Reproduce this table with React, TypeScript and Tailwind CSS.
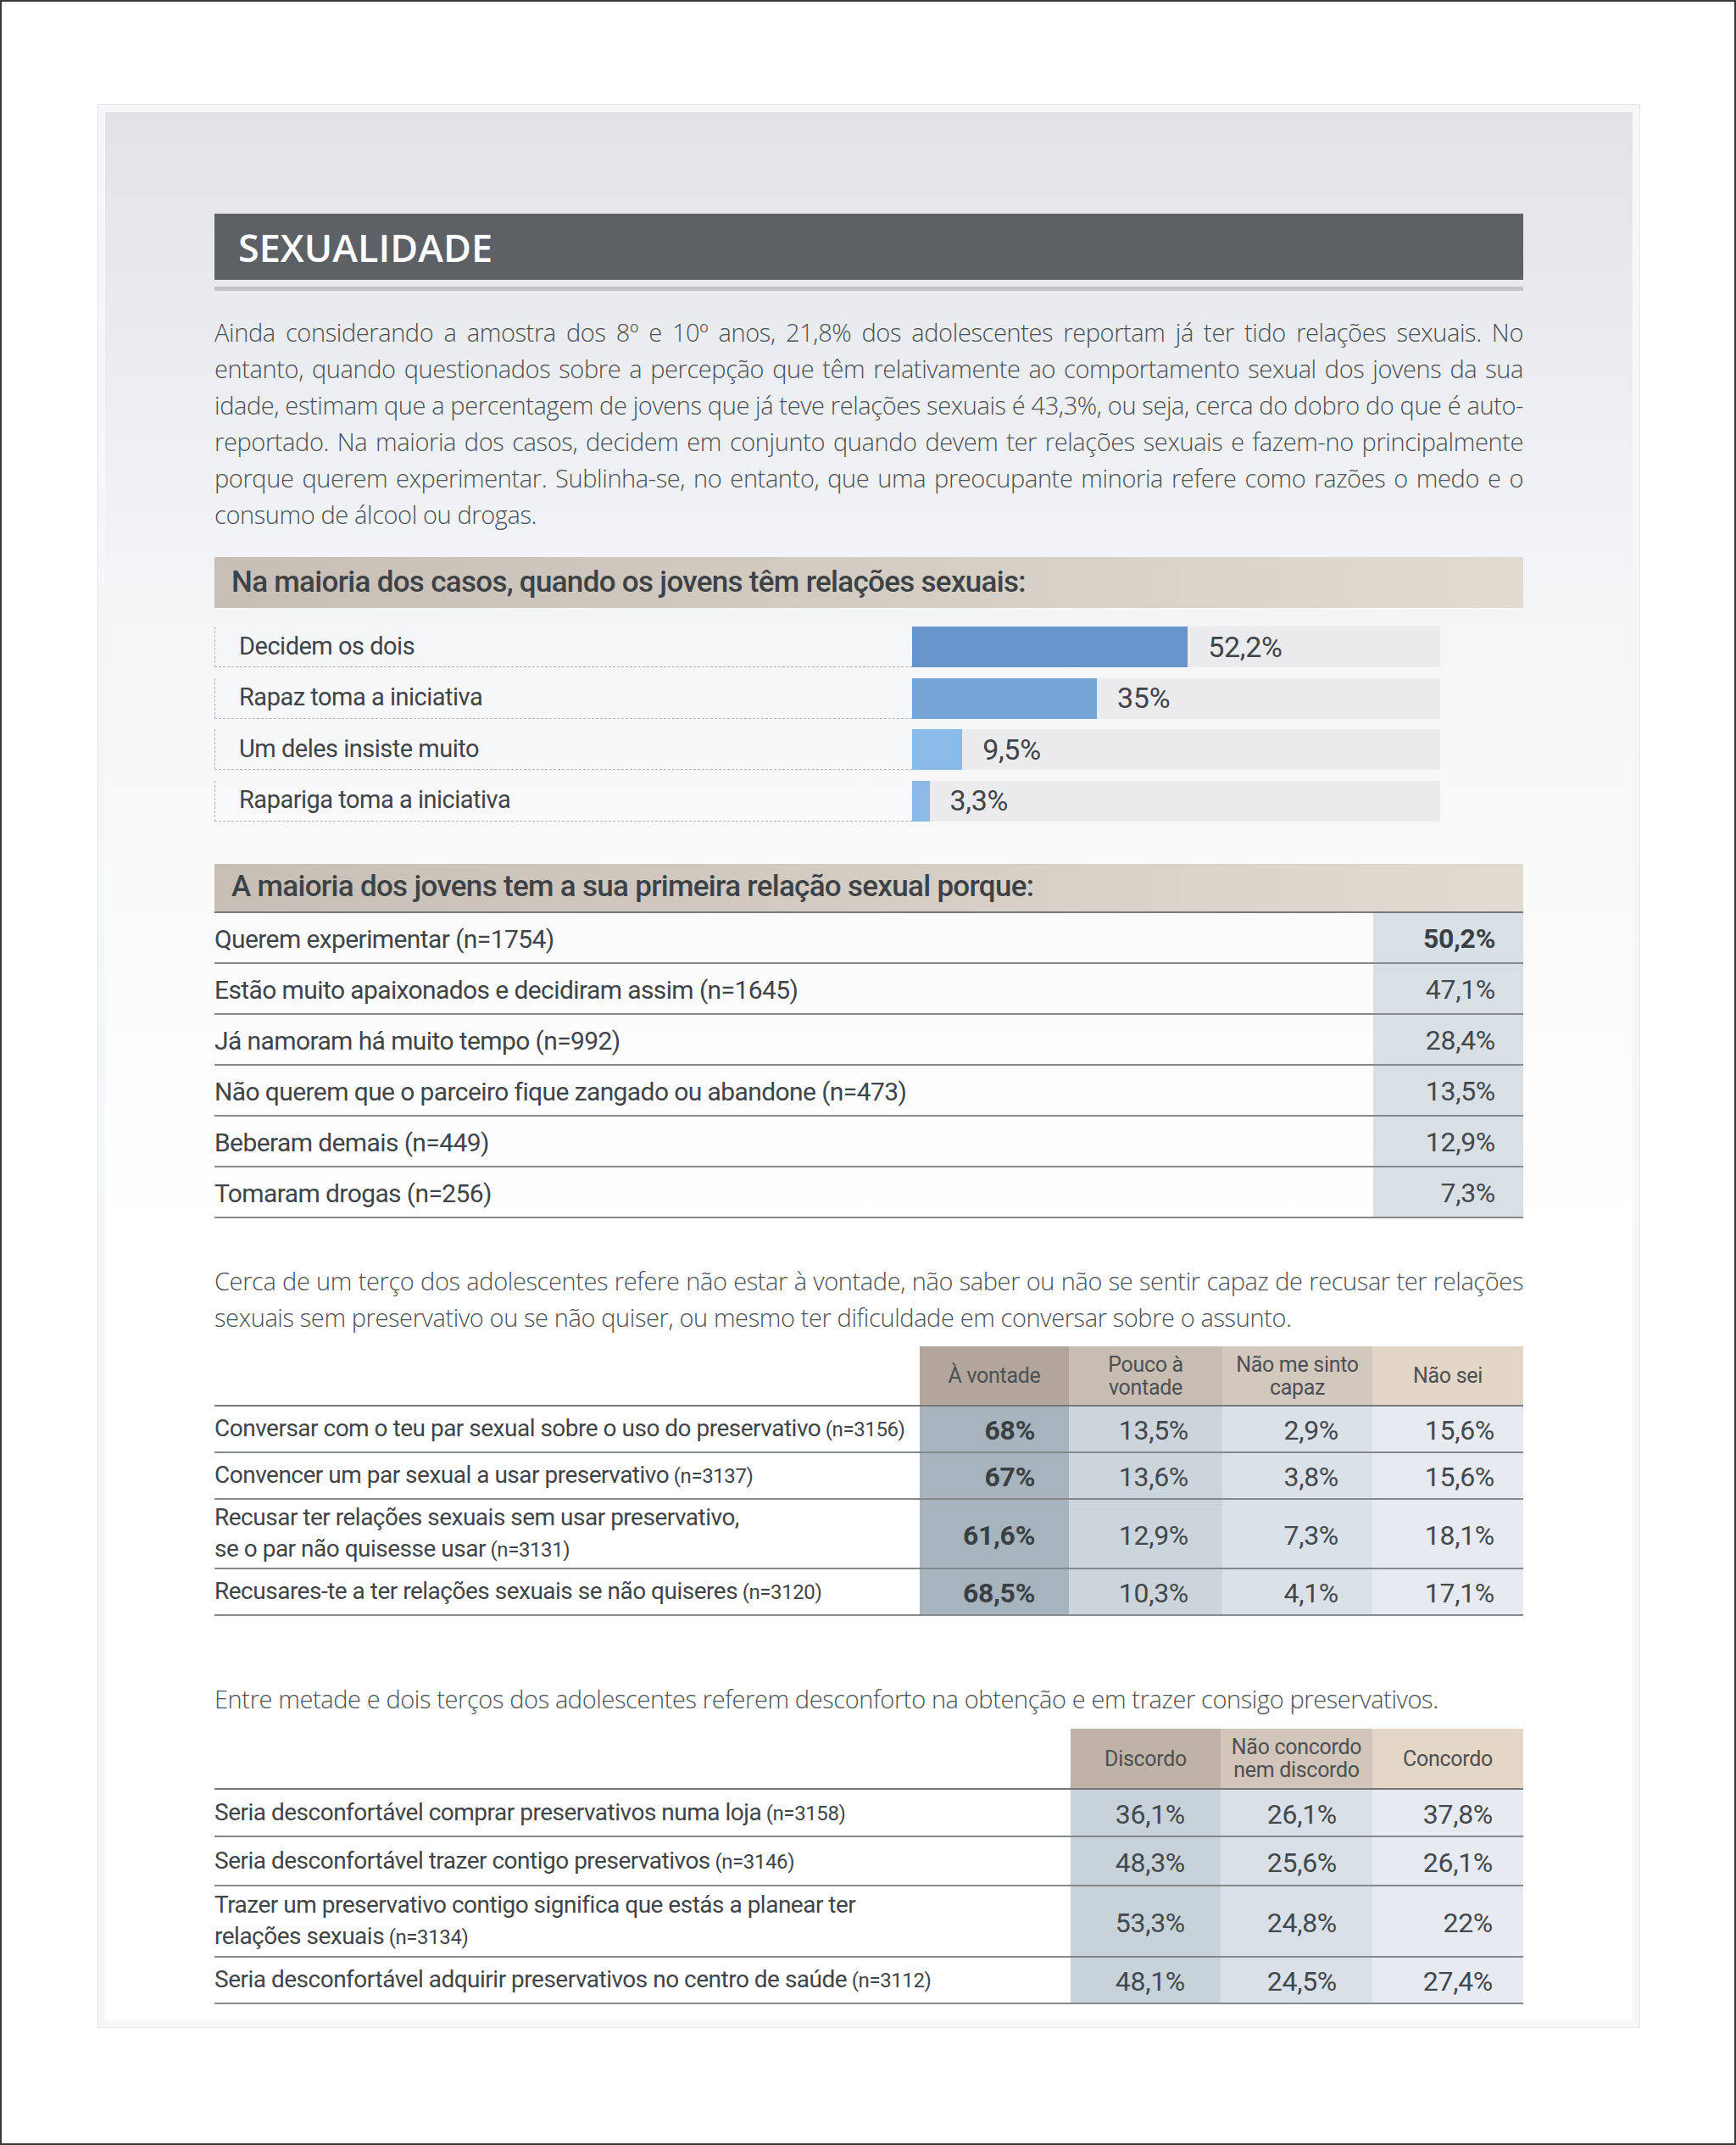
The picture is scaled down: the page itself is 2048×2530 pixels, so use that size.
import React from "react";

const para1 = [
  "Ainda considerando a amostra dos 8º e 10º anos, 21,8% dos adolescentes reportam já ter tido relações sexuais. No",
  "entanto, quando questionados sobre a percepção que têm relativamente ao comportamento sexual dos jovens da sua",
  "idade, estimam que a percentagem de jovens que já teve relações sexuais é 43,3%, ou seja, cerca do dobro do que é auto-",
  "reportado. Na maioria dos casos, decidem em conjunto quando devem ter relações sexuais e fazem-no principalmente",
  "porque querem experimentar. Sublinha-se, no entanto, que uma preocupante minoria refere como razões o medo e o",
];

const bars = [
  { label: "Decidem os dois", value: 52.2, text: "52,2%", color: "bg-[#6694cb]" },
  { label: "Rapaz toma a iniciativa", value: 35, text: "35%", color: "bg-[#77a4d6]" },
  { label: "Um deles insiste muito", value: 9.5, text: "9,5%", color: "bg-[#8abae8]" },
  { label: "Rapariga toma a iniciativa", value: 3.3, text: "3,3%", color: "bg-[#8db9e6]" },
];

const reasons = [
  { label: "Querem experimentar (n=1754)", value: "50,2%", bold: true },
  { label: "Estão muito apaixonados e decidiram assim (n=1645)", value: "47,1%" },
  { label: "Já namoram há muito tempo (n=992)", value: "28,4%" },
  { label: "Não querem que o parceiro fique zangado ou abandone (n=473)", value: "13,5%" },
  { label: "Beberam demais (n=449)", value: "12,9%" },
  { label: "Tomaram drogas (n=256)", value: "7,3%" },
];

const refuse = [
  { label: "Conversar com o teu par sexual sobre o uso do preservativo", n: "(n=3156)", h: "h-[53px]", v: ["68%", "13,5%", "2,9%", "15,6%"] },
  { label: "Convencer um par sexual a usar preservativo", n: "(n=3137)", h: "h-[53px]", v: ["67%", "13,6%", "3,8%", "15,6%"] },
  { label: "Recusar ter relações sexuais sem usar preservativo,\nse o par não quisesse usar", n: "(n=3131)", h: "h-[80px]", v: ["61,6%", "12,9%", "7,3%", "18,1%"] },
  { label: "Recusares-te a ter relações sexuais se não quiseres", n: "(n=3120)", h: "h-[53px]", v: ["68,5%", "10,3%", "4,1%", "17,1%"] },
];

const discomfort = [
  { label: "Seria desconfortável comprar preservativos numa loja", n: "(n=3158)", h: "h-[54px]", v: ["36,1%", "26,1%", "37,8%"] },
  { label: "Seria desconfortável trazer contigo preservativos", n: "(n=3146)", h: "h-[56px]", v: ["48,3%", "25,6%", "26,1%"] },
  { label: "Trazer um preservativo contigo significa que estás a planear ter\nrelações sexuais", n: "(n=3134)", h: "h-[82px]", v: ["53,3%", "24,8%", "22%"] },
  { label: "Seria desconfortável adquirir preservativos no centro de saúde", n: "(n=3112)", h: "h-[53px]", v: ["48,1%", "24,5%", "27,4%"] },
];

const t2Head = ["bg-[#b2a69c]", "bg-[#c8bdb2]", "bg-[#d3c8bd]", "bg-[#e3d6c7]"];
const t2Body = ["bg-[#a8b4bd]", "bg-[#cdd5dc]", "bg-[#dbe1e8]", "bg-[#e8eaf1]"];
const t3Head = ["bg-[#bfb3a7]", "bg-[#d2c6ba]", "bg-[#e4d7c8]"];
const t3Body = ["bg-[#c8d2da]", "bg-[#d9e0e7]", "bg-[#e7eaf1]"];

function SectionHeader({ children, line }: { children: React.ReactNode; line?: boolean }) {
  return (
    <div
      className={
        "flex items-center pl-[20px] bg-[linear-gradient(90deg,#c7beb5,#e1dbd2)] font-['Roboto',sans-serif] font-medium text-[35px] tracking-[-0.7px] text-[#3d4246] " +
        (line ? "h-[58px] border-b-2 border-[#76797c]" : "h-[60px]")
      }
    >
      {children}
    </div>
  );
}

// label cell with the smaller (n=...) part
function Label({ text, n }: { text: string; n: string }) {
  const lines = text.split("\n");
  return (
    <div className="flex flex-col justify-center leading-[37px] text-[28px] tracking-[-0.5px] text-[#3f4448] whitespace-nowrap">
      {lines.map((l, i) => (
        <div key={i}>
          {l}
          {i === lines.length - 1 && <span className="text-[24px] tracking-[-0.4px]"> {n}</span>}
        </div>
      ))}
    </div>
  );
}

export default function App() {
  return (
    <div className="w-[2048px] h-[2530px] border-2 border-[#3a3a3a] bg-white">
      <div className="ml-[113px] mt-[121px] w-[1820px] border border-[#e4e6e8] bg-[#f6f7f8] p-[8px]">
        <div className="bg-[linear-gradient(180deg,#e1e3e6_0%,#eaecef_12%,#f4f5f7_26%,#fafafb_40%,#ffffff_60%)] px-[129px] pt-[120px] pb-[19px] text-[#43484c]">
          {/* title */}
          <div className="h-[78px] bg-[#5d6165] flex items-center pl-[28px]">
            <h1 className="font-['Open_Sans',sans-serif] font-semibold text-[45px] text-white leading-none">
              SEXUALIDADE
            </h1>
          </div>
          <div className="mt-[8px] h-[5px] bg-[#c1c5c9]" />

          {/* intro paragraph */}
          <div className="mt-[27px] font-['Open_Sans',sans-serif] font-light text-[29px] leading-[43px] tracking-[-0.4px] text-[#4b5054]">
            {para1.map((l) => (
              <div key={l} className="text-justify [text-align-last:justify] whitespace-nowrap">
                {l}
              </div>
            ))}
            <div>consumo de álcool ou drogas.</div>
          </div>

          {/* bar chart */}
          <div className="mt-[29px]">
            <SectionHeader>Na maioria dos casos, quando os jovens têm relações sexuais:</SectionHeader>
          </div>
          <div className="mt-[22px] flex flex-col gap-[12.5px] font-['Roboto',sans-serif]">
            {bars.map((b) => (
              <div key={b.label} className="flex h-[48px]">
                <div className="w-[823px] border-l border-b border-dashed border-[#b3b6b9] flex items-center pl-[28px] text-[29px] tracking-[-0.5px] text-[#3f4448]">
                  {b.label}
                </div>
                <div className="w-[623px] bg-[#ebebed] flex items-center">
                  <div className={"h-full " + b.color} style={{ width: `${b.value}%` }} />
                  <span className="ml-[24px] text-[34px] tracking-[-0.3px] text-[#3f4448]">{b.text}</span>
                </div>
              </div>
            ))}
          </div>

          {/* reasons table */}
          <div className="mt-[50px]">
            <SectionHeader line>A maioria dos jovens tem a sua primeira relação sexual porque:</SectionHeader>
          </div>
          <div className="font-['Roboto',sans-serif]">
            {reasons.map((r) => (
              <div key={r.label} className="grid grid-cols-[1fr_177px] h-[60px]">
                <div className="flex items-center pt-[3px] border-b-2 border-[#86898c] text-[30px] tracking-[-0.6px] text-[#3f4448] whitespace-nowrap">
                  {r.label}
                </div>
                <div
                  className={
                    "flex items-center justify-end pt-[3px] pr-[33px] bg-[#d9e0e5] border-b-2 border-[#86898c] text-[32px] tracking-[-0.3px] " +
                    (r.bold ? "font-bold text-[#3a3f43]" : "text-[#43484c]")
                  }
                >
                  {r.value}
                </div>
              </div>
            ))}
          </div>

          {/* paragraph 2 */}
          <div className="mt-[52px] font-['Open_Sans',sans-serif] font-light text-[29px] leading-[43px] tracking-[-0.4px] text-[#4b5054]">
            <div className="text-justify [text-align-last:justify] whitespace-nowrap">
              Cerca de um terço dos adolescentes refere não estar à vontade, não saber ou não se sentir capaz de recusar ter relações
            </div>
            <div className="whitespace-nowrap">
              sexuais sem preservativo ou se não quiser, ou mesmo ter dificuldade em conversar sobre o assunto.
            </div>
          </div>

          {/* refuse table */}
          <div className="mt-[13.5px] font-['Roboto',sans-serif]">
            <div className="grid grid-cols-[832px_176px_181px_177px_178px] h-[71px] border-b-2 border-[#76797c]">
              <div />
              {["À vontade", "Pouco à\nvontade", "Não me sinto\ncapaz", "Não sei"].map((h, i) => (
                <div
                  key={h}
                  className={
                    "flex items-center justify-center text-center whitespace-pre-line text-[25px] leading-[27px] tracking-[-0.3px] text-[#4c5054] " +
                    t2Head[i]
                  }
                >
                  {h}
                </div>
              ))}
            </div>
            {refuse.map((r) => (
              <div key={r.n} className={"grid grid-cols-[832px_176px_181px_177px_178px] box-content border-b-2 border-[#86898c] " + r.h}>
                <Label text={r.label} n={r.n} />
                {r.v.map((v, i) => (
                  <div
                    key={i}
                    className={
                      "flex items-center justify-end pt-[3px] text-[32px] tracking-[-0.3px] " +
                      (i === 3 ? "pr-[34px] " : "pr-[40px] ") +
                      (i === 0 ? "font-bold text-[#3a3f43] " : "text-[#43484c] ") +
                      t2Body[i]
                    }
                  >
                    {v}
                  </div>
                ))}
              </div>
            ))}
          </div>

          {/* paragraph 3 */}
          <div className="mt-[76px] font-['Open_Sans',sans-serif] font-light text-[29px] leading-[43px] tracking-[-0.4px] text-[#4b5054] whitespace-nowrap">
            Entre metade e dois terços dos adolescentes referem desconforto na obtenção e em trazer consigo preservativos.
          </div>

          {/* discomfort table */}
          <div className="mt-[14px] font-['Roboto',sans-serif]">
            <div className="grid grid-cols-[1010px_177px_179px_178px] h-[70px] box-content border-b-2 border-[#76797c]">
              <div />
              {["Discordo", "Não concordo\nnem discordo", "Concordo"].map((h, i) => (
                <div
                  key={h}
                  className={
                    "flex items-center justify-center text-center whitespace-pre-line text-[25px] leading-[27px] tracking-[-0.3px] text-[#4c5054] " +
                    t3Head[i]
                  }
                >
                  {h}
                </div>
              ))}
            </div>
            {discomfort.map((r) => (
              <div key={r.n} className={"grid grid-cols-[1010px_177px_179px_178px] box-content border-b-2 border-[#86898c] " + r.h}>
                <Label text={r.label} n={r.n} />
                {r.v.map((v, i) => (
                  <div
                    key={i}
                    className={
                      "flex items-center justify-end pt-[3px] text-[32px] tracking-[-0.3px] text-[#43484c] " +
                      (i === 2 ? "pr-[36px] " : "pr-[42px] ") +
                      t3Body[i]
                    }
                  >
                    {v}
                  </div>
                ))}
              </div>
            ))}
          </div>
        </div>
      </div>
    </div>
  );
}
